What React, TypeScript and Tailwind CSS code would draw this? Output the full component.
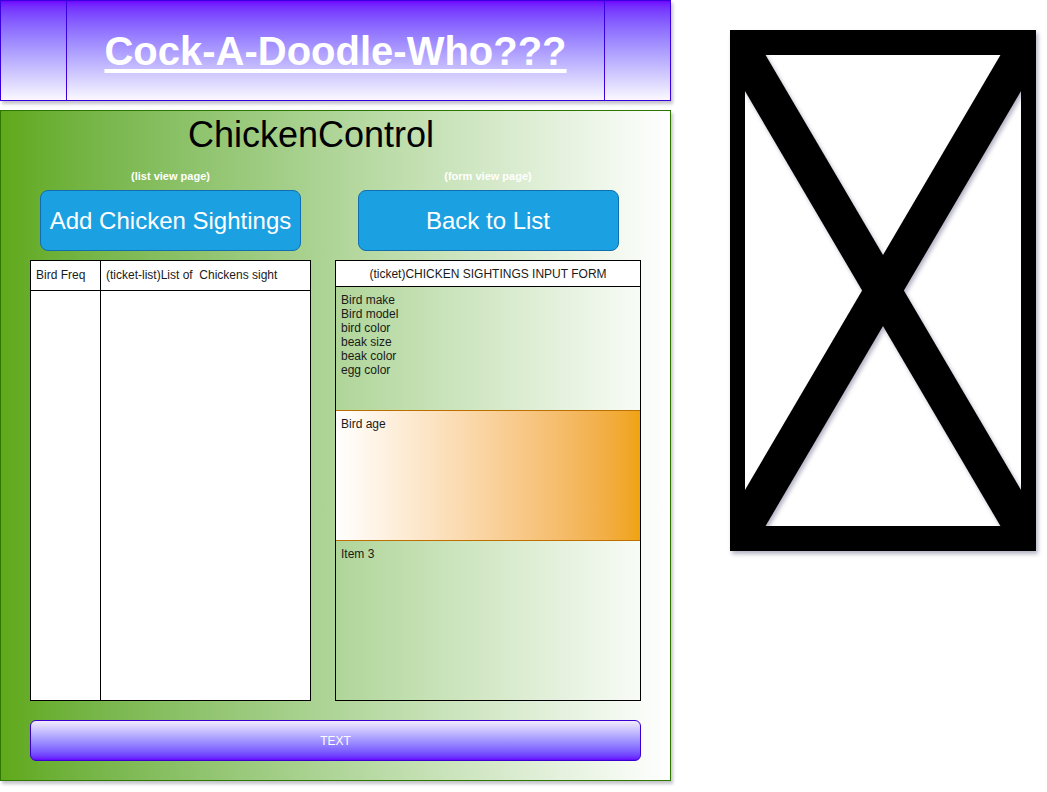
import React from "react";

export default function App() {
  return (
    <div
      className="w-[1047px] h-[792px] bg-white flex items-start overflow-hidden"
      style={{ fontFamily: '"Liberation Sans", Arial, sans-serif' }}
    >
      <div className="flex flex-col w-[671px] gap-[9px]">
        {/* Header */}
        <div className="h-[101px] border border-[#3a00dd] bg-gradient-to-b from-[#7000ff] to-[#fbf8ff] grid grid-cols-[66px_1fr_66px] shadow-[2px_3px_3px_rgba(60,60,90,0.3)]">
          <div className="border-r border-[#3a00dd]" />
          <div className="flex items-center justify-center pt-[1px]">
            <span className="text-white font-bold text-[40px] underline decoration-[4px] underline-offset-[4px]">
              Cock-A-Doodle-Who???
            </span>
          </div>
          <div className="border-l border-[#3a00dd]" />
        </div>

        {/* Main */}
        <div className="h-[671px] border border-[#2d7600] bg-gradient-to-r from-[#60a917] to-white shadow-[2px_3px_3px_rgba(60,60,90,0.3)] flex flex-col">
          <div className="w-[620px] text-center text-[36px] leading-[36px] text-black mt-[6px]">
            ChickenControl
          </div>
          <div className="flex pl-[29px] mt-[17px]">
            {/* Left column */}
            <div className="w-[281px] flex flex-col items-center">
              <div className="text-white font-bold text-[11px] leading-[12px]">(list view page)</div>
              <div className="mt-[8px] w-[261px] h-[61px] rounded-[8px] bg-[#1ba1e2] border border-[#0f6fb0] flex items-center justify-center text-white text-[24px]">
                Add Chicken Sightings
              </div>
              <div className="mt-[9px] w-[281px] h-[441px] border border-black bg-white grid grid-cols-[70px_1fr] grid-rows-[30px_1fr]">
                <div className="border-r border-b border-black text-[12px] text-[#1a1a1a] flex items-center pl-[5px] pb-[2px]">Bird Freq</div>
                <div className="border-b border-black text-[12px] text-[#1a1a1a] flex items-center pl-[5px] pb-[2px] whitespace-pre">(ticket-list)List of  Chickens sight</div>
                <div className="border-r border-black" />
                <div />
              </div>
            </div>
            {/* Right column */}
            <div className="ml-[24px] w-[306px] flex flex-col items-center">
              <div className="text-white font-bold text-[11px] leading-[12px]">(form view page)</div>
              <div className="mt-[8px] w-[261px] h-[61px] rounded-[8px] bg-[#1ba1e2] border border-[#0f6fb0] flex items-center justify-center text-white text-[24px]">
                Back to List
              </div>
              <div className="mt-[9px] w-[306px] h-[441px] border border-black flex flex-col text-[12px] text-[#1a1a1a]">
                <div className="h-[26px] bg-white border-b border-black flex items-center justify-center">
                  (ticket)CHICKEN SIGHTINGS INPUT FORM
                </div>
                <div className="h-[123px] pl-[5px] pt-[6px] leading-[14px]">
                  <div>Bird make</div>
                  <div>Bird model</div>
                  <div>bird color</div>
                  <div>beak size</div>
                  <div>beak color</div>
                  <div>egg color</div>
                </div>
                <div className="h-[131px] border-y border-[#bd7000] bg-gradient-to-r from-white to-[#f0a30a] pl-[5px] pt-[6px] leading-[14px]">
                  Bird age
                </div>
                <div className="flex-1 pl-[5px] pt-[6px] leading-[14px]">Item 3</div>
              </div>
            </div>
          </div>
          <div className="ml-[29px] mt-[19px] w-[611px] h-[41px] rounded-[6px] border border-[#3a00d0] bg-gradient-to-b from-[#f3ebff] to-[#6600ff] flex items-center justify-center text-white text-[12px]">
            TEXT
          </div>
        </div>
      </div>

      {/* Image placeholder X */}
      <div className="ml-[59px] mt-[30px]">
        <svg width="306" height="521" viewBox="0 0 306 521" style={{ filter: "drop-shadow(2px 3px 2px rgba(40,40,90,0.35))" }}>
          <defs>
            <clipPath id="inner">
              <rect x="15" y="25" width="276" height="471" />
            </clipPath>
          </defs>
          <rect x="0" y="0" width="306" height="521" fill="#000" />
          <rect x="15" y="25" width="276" height="471" fill="#fff" />
          <g clipPath="url(#inner)" style={{ filter: "drop-shadow(2px 3px 2px rgba(40,40,90,0.35))" }}>
            <line x1="0" y1="0" x2="306" y2="521" stroke="#000" strokeWidth="36" />
            <line x1="306" y1="0" x2="0" y2="521" stroke="#000" strokeWidth="36" />
          </g>
        </svg>
      </div>
    </div>
  );
}
